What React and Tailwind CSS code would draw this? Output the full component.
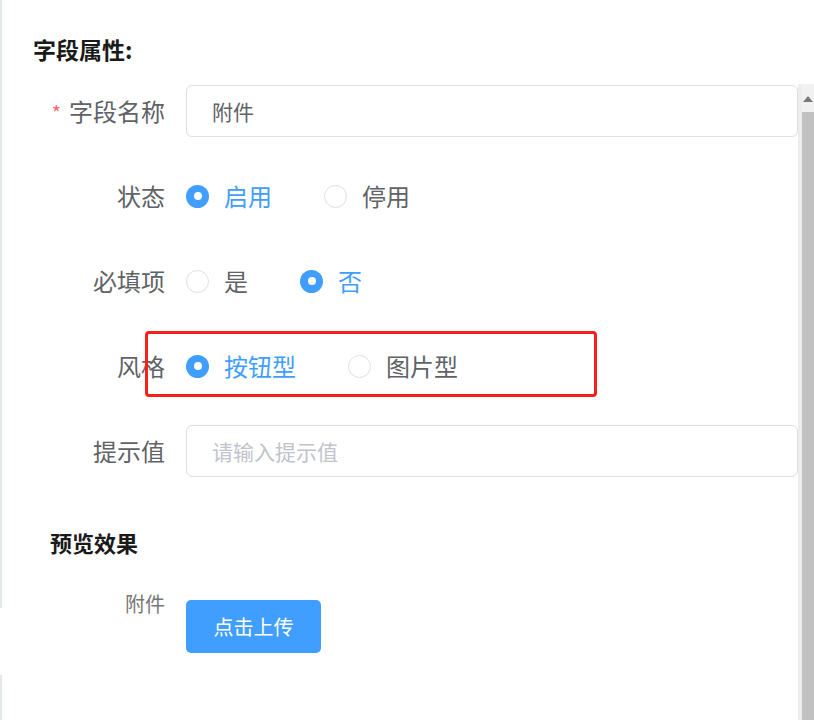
import React, { useState } from "react";

const FONT = { fontFamily: '"Noto Sans CJK SC", "Noto Sans", sans-serif' };

const Radio = ({ checked, label, onClick }) => (
  <button
    type="button"
    onClick={onClick}
    className="flex items-center mr-[52px] cursor-pointer"
  >
    {checked ? (
      <span className="w-[23px] h-[23px] rounded-full bg-[#409eff] flex items-center justify-center">
        <span className="w-[8px] h-[8px] rounded-full bg-white" />
      </span>
    ) : (
      <span className="w-[23px] h-[23px] rounded-full border border-[#dcdfe6] bg-white" />
    )}
    <span
      className={`ml-[15px] text-[24px] leading-none ${
        checked ? "text-[#409eff]" : "text-[#606266]"
      }`}
    >
      {label}
    </span>
  </button>
);

const FormRow = ({ label, required, children }) => (
  <div className="flex items-center h-[52px] relative">
    <div className="w-[163px] text-right text-[24px] leading-none text-[#606266]">
      {required && <span className="text-[#f56c6c] mr-[8px] text-[20px]">*</span>}
      {label}
    </div>
    <div className="flex-1 flex items-center ml-[21px] h-full">{children}</div>
  </div>
);

const App = () => {
  const [status, setStatus] = useState("on");
  const [required, setRequired] = useState("no");
  const [style, setStyle] = useState("button");
  const [name, setName] = useState("附件");
  const [hint, setHint] = useState("");

  return (
    <div
      className="w-[814px] h-[720px] bg-white flex overflow-hidden"
      style={FONT}
    >
      {/* left edge line */}
      <div className="w-[2px] flex flex-col">
        <div className="h-[608px] bg-[#e4e7ed]" />
        <div className="h-[67px] bg-white" />
        <div className="flex-1 bg-[#e4e7ed]" />
      </div>

      <div className="w-[796px] flex flex-col pt-[36px]">
        <h2 className="ml-[31px] text-[23px] leading-[26px] font-bold text-[#1a1a1a]">
          字段属性:
        </h2>

        <div className="mt-[23px] flex flex-col gap-[33px]">
          <FormRow label="字段名称" required>
            <input
              value={name}
              onChange={(e) => setName(e.target.value)}
              className="w-full h-full border border-[#dcdfe6] rounded-[6px] px-[25px] text-[21px] text-[#606266] outline-none"
            />
          </FormRow>

          <FormRow label="状态">
            <Radio checked={status === "on"} label="启用" onClick={() => setStatus("on")} />
            <Radio checked={status === "off"} label="停用" onClick={() => setStatus("off")} />
          </FormRow>

          <FormRow label="必填项">
            <Radio checked={required === "yes"} label="是" onClick={() => setRequired("yes")} />
            <Radio checked={required === "no"} label="否" onClick={() => setRequired("no")} />
          </FormRow>

          <FormRow label="风格">
            <Radio checked={style === "button"} label="按钮型" onClick={() => setStyle("button")} />
            <Radio checked={style === "image"} label="图片型" onClick={() => setStyle("image")} />
            {/* annotation box */}
            <div className="absolute left-[143px] top-[-9px] w-[452px] h-[66px] border-[3px] border-[#f5221b] rounded-[4px] pointer-events-none" />
          </FormRow>

          <FormRow label="提示值">
            <input
              value={hint}
              onChange={(e) => setHint(e.target.value)}
              placeholder="请输入提示值"
              className="w-full h-full border border-[#dcdfe6] rounded-[6px] px-[25px] text-[21px] text-[#606266] placeholder:text-[#c0c4cc] outline-none"
            />
          </FormRow>
        </div>

        <h3 className="ml-[48px] mt-[52px] text-[22px] leading-[26px] font-bold text-[#1a1a1a]">
          预览效果
        </h3>

        <div className="mt-[37px] flex">
          <div className="w-[163px] text-right text-[20px] leading-[24px] text-[#777]">
            附件
          </div>
          <button
            type="button"
            className="ml-[21px] mt-[8px] w-[135px] h-[53px] rounded-[5px] bg-[#409eff] text-white text-[20px]"
          >
            点击上传
          </button>
        </div>
      </div>

      {/* scrollbar */}
      <div className="w-[16px] flex flex-col pt-[84px]">
        <div className="flex-1 flex">
          <div className="w-[4px] bg-[#ededed]" />
          <div className="flex-1 flex flex-col">
            <div className="h-[28px] bg-[#f1f1f1] flex items-start justify-center pt-[12px]">
              <span className="w-0 h-0 border-l-[5px] border-r-[5px] border-b-[6px] border-l-transparent border-r-transparent border-b-[#7a7a7a]" />
            </div>
            <div className="flex-1 bg-[#c1c1c1]" />
          </div>
        </div>
      </div>
    </div>
  );
};

export default App;
